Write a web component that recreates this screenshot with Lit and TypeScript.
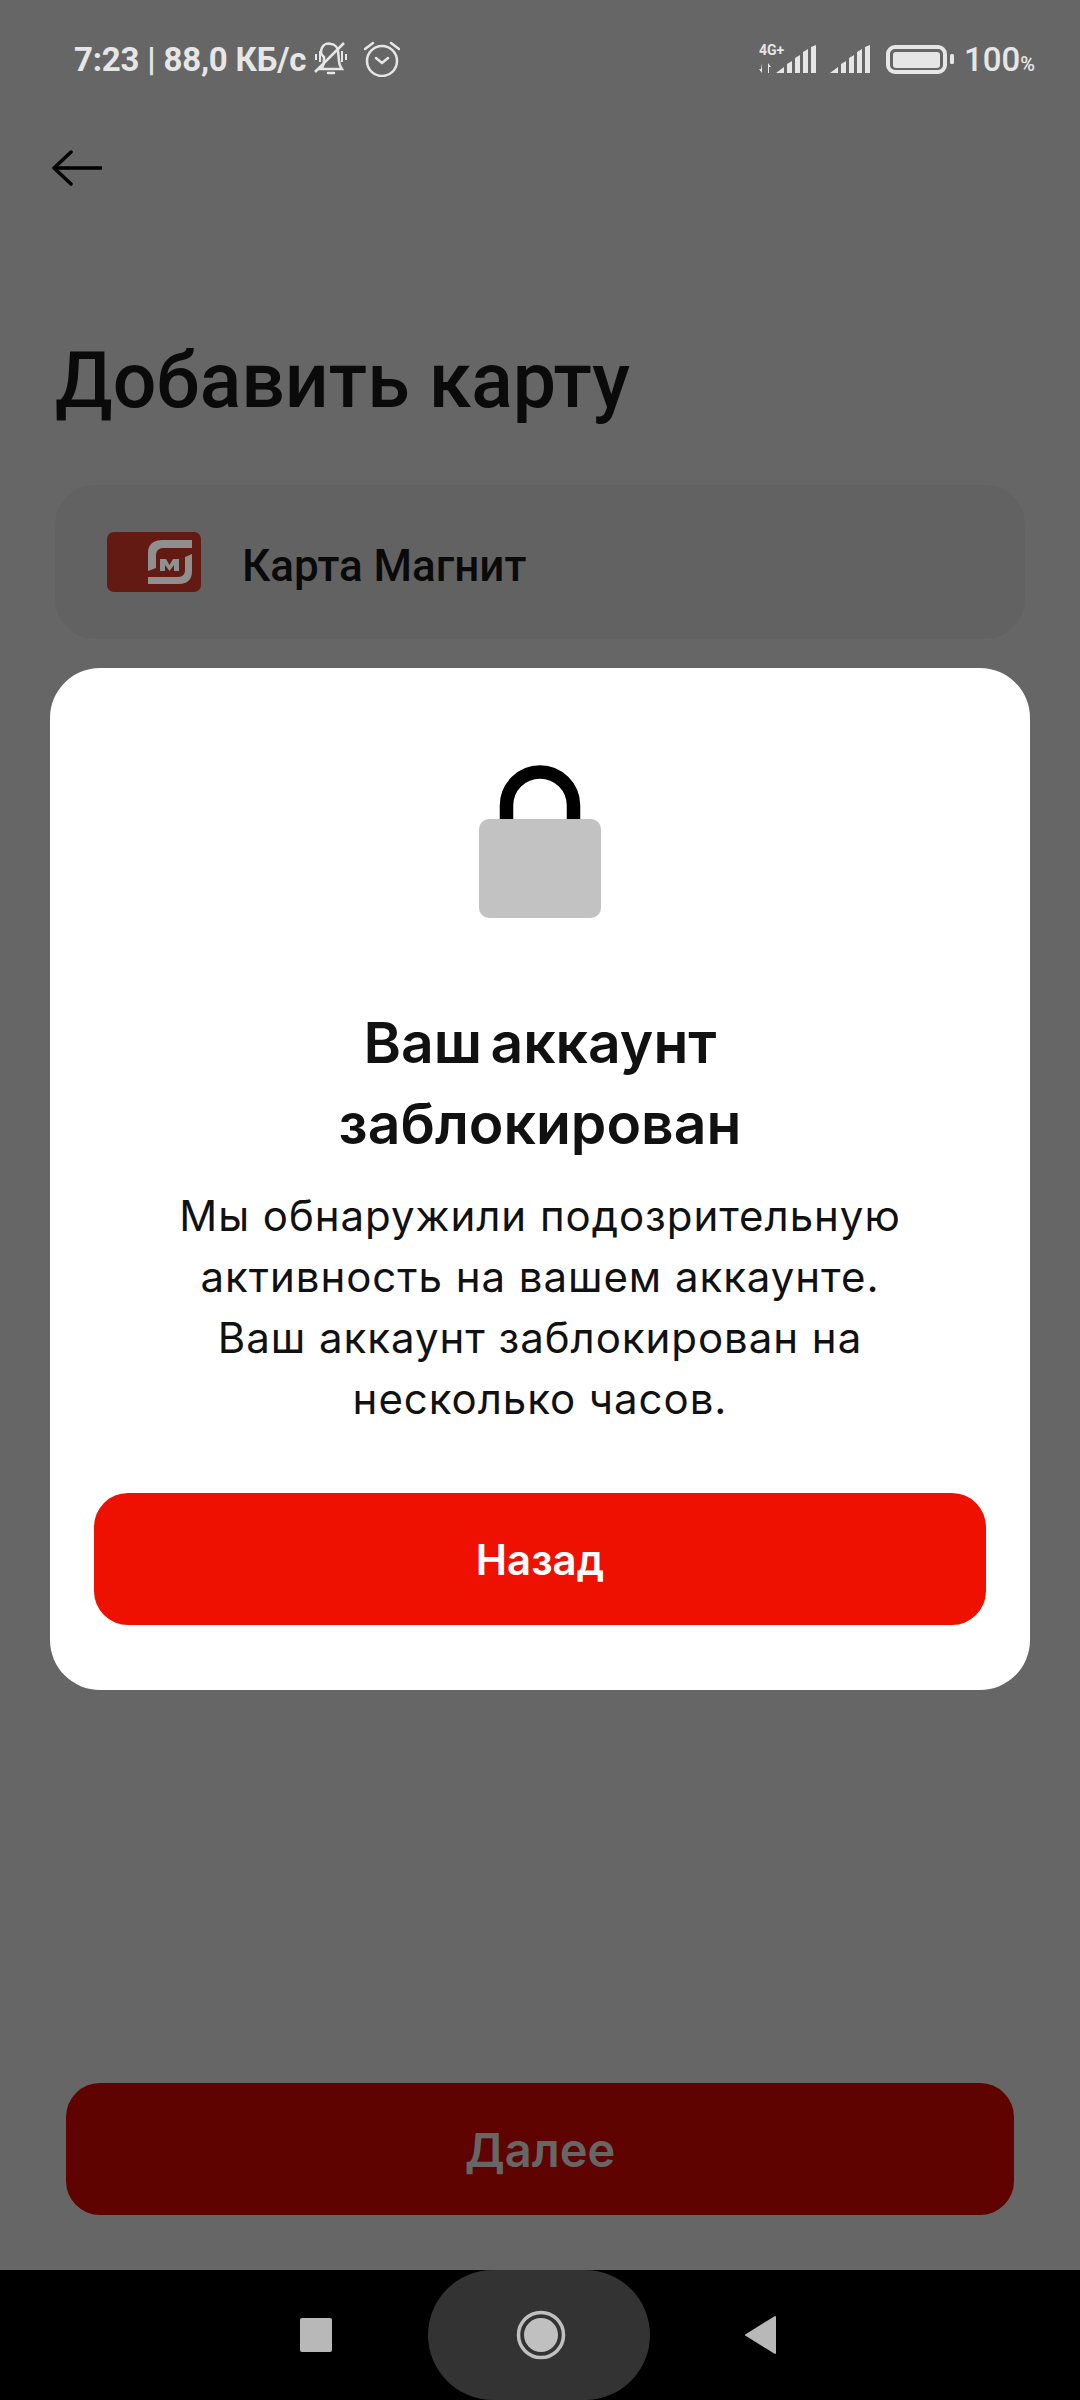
import { LitElement, html, css } from "lit";
import { customElement } from "lit/decorators.js";

@customElement("app-root")
export class AppRoot extends LitElement {
  static styles = css`
    :host { display: block; width: 1080px; height: 2400px; font-family: Roboto, "Noto Sans", sans-serif; }
    .page { position: relative; width: 1080px; height: 2400px; background: #666; display: flex; flex-direction: column; overflow: hidden; }
    .screen { flex: 1; display: flex; flex-direction: column; min-height: 0; }
    .status { height: 118px; padding: 0 45px 0 74px; display: flex; align-items: center; justify-content: space-between; color: #e6e6e6; box-sizing: border-box; }
    .sleft, .sright { display: flex; align-items: center; }
    .stext { font-size: 33px; font-weight: 700; letter-spacing: -0.2px; }
    .bell { margin-left: 8px; }
    .alarm { margin-left: 14px; }
    .pct { font-size: 33px; font-weight: 500; margin-left: 9px; }
    .pct small { font-size: 20px; }
    .back { margin: 30px 0 0 52px; height: 40px; display: flex; }
    .title { margin: 148px 0 0 55px; font-family: Roboto, sans-serif; font-size: 77px; font-weight: 500; color: #0a0a0a; line-height: 90px; }
    .card { margin: 59px 55px 0; height: 154px; border-radius: 40px; background: #626262; display: flex; align-items: center; padding-left: 52px; gap: 41px; }
    .card span { font-family: Roboto, sans-serif; font-size: 44px; font-weight: 500; color: #0a0a0a; position: relative; top: 4px; }
    .grow { flex: 1; }
    .next { margin: 0 66px 55px; height: 132px; border-radius: 34px; background: #5f0300; color: #666; display: flex; align-items: center; justify-content: center; font-family: Inter, sans-serif; font-size: 47px; font-weight: 600; }
    .nav { height: 130px; background: #000; display: flex; align-items: center; justify-content: center; flex: none; padding-right: 4px; }
    .pill { width: 222px; height: 130px; border-radius: 65px; background: #333; display: flex; align-items: center; justify-content: center; margin: 0 95px 0 96px; }
    .home { margin-left: 4px; }
    .modal { position: absolute; left: 50px; top: 668px; width: 980px; height: 1022px; box-sizing: border-box; background: #fff; border-radius: 50px; display: flex; flex-direction: column; align-items: center; padding: 97px 44px 0; }
    .lock { display: block; }
    .h { margin: 84px 0 0; font-family: Inter, sans-serif; font-size: 57px; font-weight: 600; line-height: 81px; text-align: center; color: #111; word-spacing: -6px; }
    .p { margin: 21px 0 0; font-family: Inter, sans-serif; font-size: 42px; letter-spacing: 0.950px; line-height: 61px; text-align: center; color: #111; font-weight: 400; }
    .btn { margin-top: 64px; width: 892px; height: 132px; flex: none; border-radius: 34px; background: #ee1000; color: #fff; display: flex; align-items: center; justify-content: center; font-family: Inter, sans-serif; font-size: 42px; font-weight: 600; }
  `;

  render() {
    return html`<div class="page">
      <div class="screen">
        <div class="status">
          <div class="sleft">
            <span class="stext">7:23 | 88,0 КБ/с</span>
            <svg class="bell" width="36" height="36" viewBox="0 0 36 36" fill="none" stroke="#e6e6e6" stroke-width="2.500">
              <path d="M7 28c3-3 3-6 3-12a7.500 7.500 0 0 1 7-13 8 8 0 0 1 7 7l1 10c0 4 2 6 3 8z"/>
              <path d="M14 32h6" stroke-linecap="round"/>
              <path d="M1 31 30 2" stroke-width="2.500"/>
              <path d="M2 13v6M6 10v11M28 10v11M32 13v6" stroke-width="2"/>
            </svg>
            <svg class="alarm" width="36" height="36" viewBox="0 0 36 36" fill="none" stroke="#e6e6e6" stroke-width="2.500">
              <circle cx="18" cy="20" r="15"/>
              <path d="M12 17l6 5 6-5M1 8l8-6M35 8l-8-6" stroke-linecap="round" stroke-linejoin="round"/>
            </svg>
          </div>
          <div class="sright">
            <svg width="196" height="32" viewBox="760 42 196 32" fill="#e6e6e6">
              <text x="760" y="54" font-family="Roboto" font-weight="700" font-size="14">4G+</text>
              <path d="M763 62v10l-3-4h2zM769 62v10h1v-6h2zM777 72l8-6v6zM788 72v-9l5-3v12zM796 72V57l5-3v18zM804 72V51l5-3v24zM812 72V46l5-2v28z"/>
              <path d="M831 72l8-6v6zM842 72v-9l5-3v12zM850 72V57l5-3v18zM858 72V51l5-3v24zM866 72V46l5-2v28z"/>
              <rect x="889" y="46" width="57" height="25" rx="7" fill="none" stroke="#e6e6e6" stroke-width="4"/>
              <rect x="894" y="51" width="47" height="16" rx="3"/>
              <rect x="951" y="53" width="4" height="10" rx="1.500"/>
            </svg>
            <span class="pct">100<small>%</small></span>
          </div>
        </div>
        <div class="back">
          <svg width="50" height="40" viewBox="0 0 50 40" fill="none" stroke="#000" stroke-width="3.500" stroke-linecap="round" stroke-linejoin="round">
            <path d="M2 20h47M19 4 2 20l17 16"/>
          </svg>
        </div>
        <div class="title">Добавить карту</div>
        <div class="card">
          <svg width="94" height="60" viewBox="0 0 94 60">
            <rect width="94" height="60" rx="7" fill="#631a12"/>
            <path d="M85 8H55c-9 0-14 5-14 13v18l8-3V23c0-4 3-7 7-7h29zM41 52h31c9 0 13-5 13-13V22l-7 3v13c0 4-2 7-7 7H41z" fill="#8f8f8f"/>
            <path d="M53 39V27h6l3.500 6 3.500-6h6v12h-5v-6l-4.500 6-4.500-6v6z" fill="#8f8f8f"/>
          </svg>
          <span>Карта Магнит</span>
        </div>
        <div class="grow"></div>
        <div class="next">Далее</div>
      </div>
      <div class="nav">
        <svg width="32" height="34" viewBox="0 0 32 34"><rect width="32" height="34" rx="2" fill="#b8b8b8"/></svg>
        <div class="pill">
          <svg class="home" width="50" height="52" viewBox="0 0 50 52"><circle cx="25" cy="26" r="22.500" fill="none" stroke="#c0c0c0" stroke-width="3.500"/><circle cx="25" cy="26" r="17" fill="#c0c0c0"/></svg>
        </div>
        <svg width="32" height="40" viewBox="0 0 32 40"><path d="M31 2v36a1 1 0 0 1-1 1L1 21a1 1 0 0 1 0-2L30 1a1 1 0 0 1 1 1z" fill="#b8b8b8"/></svg>
      </div>
      <div class="modal">
        <svg class="lock" width="122" height="153" viewBox="0 0 122 153">
          <path d="M27.500 60V40.500a33.500 33.500 0 0 1 67 0V60" fill="none" stroke="#000" stroke-width="13.500"/>
          <rect x="0" y="54" width="122" height="99" rx="10" fill="#c2c2c2"/>
        </svg>
        <div class="h">Ваш аккаунт<br>заблокирован</div>
        <div class="p">Мы обнаружили подозрительную<br>активность на вашем аккаунте.<br>Ваш аккаунт заблокирован на<br>несколько часов.</div>
        <div class="btn">Назад</div>
      </div>
    </div>`;
  }
}
